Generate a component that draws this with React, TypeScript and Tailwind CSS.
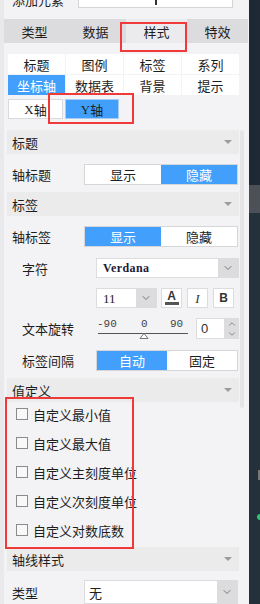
import { ChevronDown, ChevronUp } from "lucide-react";

function Caret() {
    return <div className="h-0 w-0 border-x-[4px] border-t-[4px] border-x-transparent border-t-[#9c9c9c]" />;
}

function SectionHeader({ title, className = "" }: { title: string; className?: string }) {
    return (
        <div className={`flex h-[24px] items-center justify-between bg-[#ebebeb] pl-[5px] pr-[7px] ${className}`}>
            <span>{title}</span>
            <Caret />
        </div>
    );
}

function Toggle({ left, right, active, className = "" }: { left: string; right: string; active: 0 | 1; className?: string }) {
    return (
        <div className={`flex h-[21px] border border-[#d6d6d9] bg-white ${className}`}>
            <div className={`flex flex-1 items-center justify-center ${active === 0 ? "bg-[#42a0fc] text-white" : ""}`}>{left}</div>
            <div className={`flex flex-1 items-center justify-center ${active === 1 ? "bg-[#42a0fc] text-white" : ""}`}>{right}</div>
        </div>
    );
}

function Check({ label }: { label: string }) {
    return (
        <div className="flex h-[12px] items-center gap-[5px]">
            <div className="h-[12px] w-[12px] border border-[#8a8a8a] bg-[#f8f8f8]" />
            <span>{label}</span>
        </div>
    );
}

export default function App() {
    const tabs = ["类型", "数据", "样式", "特效"];
    const subTabs = ["标题", "图例", "标签", "系列", "坐标轴", "数据表", "背景", "提示"];

    return (
        <div className="relative flex h-[604px] w-[260px] overflow-hidden font-['Noto_Sans_CJK_SC',sans-serif] text-[13px] leading-none text-[#1e1e1e]">
            <div className="flex w-[249px] shrink-0">
                <div className="w-[4px] bg-[#e9e9ec]" />
                <div className="flex w-[245px] flex-col bg-[#f3f3f5]">
                    {/* cut-off top row */}
                    <div className="flex h-[19px] items-start">
                        <div className="h-[9px] w-[74px] overflow-hidden pl-[8px]">
                            <span className="-mt-[8px] block leading-[16px]">添加元素</span>
                        </div>
                        <div className="flex h-[8px] w-[155px] justify-center border border-t-0 border-[#d4d4d4] bg-white">
                            <div className="h-[5px] w-[2px] bg-[#333]" />
                        </div>
                    </div>

                    {/* main tabs */}
                    <div className="flex h-[24px] w-[244px] bg-[#dcdcdf]">
                        {tabs.map((t) => (
                            <div key={t} className={`flex flex-1 items-center justify-center ${t === "样式" ? "bg-[#ebebee]" : ""}`}>{t}</div>
                        ))}
                    </div>

                    {/* sub tabs */}
                    <div className="ml-[4px] mt-[11px] grid w-[231px] grid-cols-4 gap-px">
                        {subTabs.map((t) => (
                            <div key={t} className={`flex h-[20px] items-center justify-center ${t === "坐标轴" ? "bg-[#42a0fc] text-white" : "bg-white"}`}>{t}</div>
                        ))}
                    </div>

                    {/* axis switch */}
                    <div className="ml-[4px] mt-[4px] flex">
                        <div className="flex h-[20px] w-[55px] items-center justify-center border border-[#dadadd] bg-white">
                            <span className="font-['Liberation_Serif',serif]">X</span>轴
                        </div>
                        <div className="ml-[2px] flex h-[20px] w-[54px] items-center justify-center border border-[#a9cdf2] bg-[#42a0fc]">
                            <span className="font-['Liberation_Serif',serif]">Y</span>轴
                        </div>
                    </div>

                    <div className="mt-[11px] flex">
                        <div className="ml-[3px] w-[232px]">
                            <SectionHeader title="标题" />
                            <div className="mt-[10px] flex h-[21px] items-center">
                                <span className="w-[77px] pl-[5px]">轴标题</span>
                                <Toggle left="显示" right="隐藏" active={1} className="w-[154px]" />
                            </div>

                            <SectionHeader title="标签" className="mt-[7px]" />
                            <div className="mt-[10px] flex h-[21px] items-center">
                                <span className="w-[77px] pl-[5px]">轴标签</span>
                                <Toggle left="显示" right="隐藏" active={0} className="w-[154px]" />
                            </div>

                            <div className="mt-[11px] flex h-[20px] items-center">
                                <span className="w-[89px] pl-[15px]">字符</span>
                                <div className="flex h-[20px] w-[143px] border border-[#dcdcdf] bg-white">
                                    <span className="flex flex-1 items-center pl-[6px] font-['Liberation_Serif',serif] text-[12px] font-bold tracking-[0.4px] text-[#1a1a3a]">Verdana</span>
                                    <div className="flex w-[20px] items-center justify-center bg-[#dcdcdf]">
                                        <ChevronDown size={12} strokeWidth={1.5} color="#555" />
                                    </div>
                                </div>
                            </div>

                            <div className="mt-[10px] flex h-[20px] pl-[89px]">
                                <div className="flex w-[61px] border border-[#dcdcdf] bg-white">
                                    <span className="flex flex-1 items-center pl-[6px] font-['Liberation_Serif',serif]">11</span>
                                    <div className="flex w-[20px] items-center justify-center bg-[#dcdcdf]">
                                        <ChevronDown size={12} strokeWidth={1.5} color="#555" />
                                    </div>
                                </div>
                                <div className="ml-[4px] flex w-[21px] flex-col items-center justify-center border border-[#dcdcdf] bg-white">
                                    <span className="font-['Liberation_Sans',sans-serif] text-[12px] font-bold leading-[10px] text-[#333]">A</span>
                                    <div className="mt-[1px] h-[3px] w-[14px] bg-[#555]" />
                                </div>
                                <div className="ml-[5px] flex w-[21px] items-center justify-center border border-[#dcdcdf] bg-white font-['Liberation_Serif',serif] text-[13px] italic text-[#333]">I</div>
                                <div className="ml-[5px] flex w-[21px] items-center justify-center border border-[#dcdcdf] bg-white font-['Liberation_Sans',sans-serif] text-[12px] font-bold text-[#333]">B</div>
                            </div>

                            <div className="mt-[10px] flex h-[21px] items-center">
                                <span className="w-[89px] pl-[15px]">文本旋转</span>
                                <svg width="93" height="21" viewBox="0 0 93 21">
                                    <text x="1" y="9" fontSize="11" fontFamily="'Liberation Mono', monospace" fill="#444">-90</text>
                                    <text x="45" y="9" fontSize="11" fontFamily="'Liberation Mono', monospace" fill="#444">0</text>
                                    <text x="74" y="9" fontSize="11" fontFamily="'Liberation Mono', monospace" fill="#444">90</text>
                                    <line x1="2" y1="15.5" x2="92" y2="15.5" stroke="#555" strokeWidth="1" />
                                    <path d="M48 15.5 L44 20.5 L52 20.5 Z" fill="#fff" stroke="#777" strokeWidth="1" />
                                </svg>
                                <div className="ml-[7px] flex h-[21px]">
                                    <div className="flex w-[29px] items-center border border-[#dcdcdf] bg-white pl-[4px] font-['Liberation_Sans',sans-serif] text-[#333]">0</div>
                                    <div className="flex w-[14px] flex-col items-center justify-center bg-[#dcdcdf]">
                                        <ChevronUp size={10} strokeWidth={1.5} color="#555" />
                                        <ChevronDown size={10} strokeWidth={1.5} color="#555" />
                                    </div>
                                </div>
                            </div>

                            <div className="mt-[11px] flex h-[21px] items-center">
                                <span className="w-[89px] pl-[15px]">标签间隔</span>
                                <Toggle left="自动" right="固定" active={0} className="w-[142px]" />
                            </div>

                            <SectionHeader title="值定义" className="mt-[7px]" />
                            <div className="flex flex-col gap-[17px] pb-[11px] pl-[9px] pt-[6px]">
                                <Check label="自定义最小值" />
                                <Check label="自定义最大值" />
                                <Check label="自定义主刻度单位" />
                                <Check label="自定义次刻度单位" />
                                <Check label="自定义对数底数" />
                            </div>

                            <SectionHeader title="轴线样式" />
                            <div className="mt-[9px] flex h-[24px] items-center">
                                <span className="w-[77px] pl-[5px]">类型</span>
                                <div className="flex h-[24px] w-[154px] border border-[#dcdcdf] bg-white">
                                    <span className="flex flex-1 items-center pl-[4px]">无</span>
                                    <div className="flex w-[20px] items-center justify-center bg-[#dcdcdf]">
                                        <ChevronDown size={12} strokeWidth={1.5} color="#555" />
                                    </div>
                                </div>
                            </div>
                        </div>
                        <div className="ml-[1px] h-[278px] w-[4px] rounded-[2px] bg-[#e5e5e8]" />
                    </div>
                </div>
            </div>

            {/* dark strip at the right */}
            <div className="flex w-[11px] flex-col">
                <div className="h-[185px] bg-[#1e2935]" />
                <div className="h-[28px] bg-[#4b5156]" />
                <div className="flex flex-1 flex-col items-end bg-[#25313a]">
                    <div className="mt-[257px] h-[10px] w-[2px] bg-[#777]" />
                    <div className="mt-[34px] h-[6px] w-[3px] rounded-l-full bg-[#2ec46a]" />
                </div>
            </div>

            {/* red annotation boxes */}
            <div className="absolute left-[120px] top-[22px] h-[30px] w-[67px] border-2 border-[#f03a3a]" />
            <div className="absolute left-[48px] top-[93px] h-[31px] w-[86px] border-2 border-[#f03a3a]" />
            <div className="absolute left-[5px] top-[397px] h-[152px] w-[129px] border-2 border-[#f03a3a]" />
        </div>
    );
}
